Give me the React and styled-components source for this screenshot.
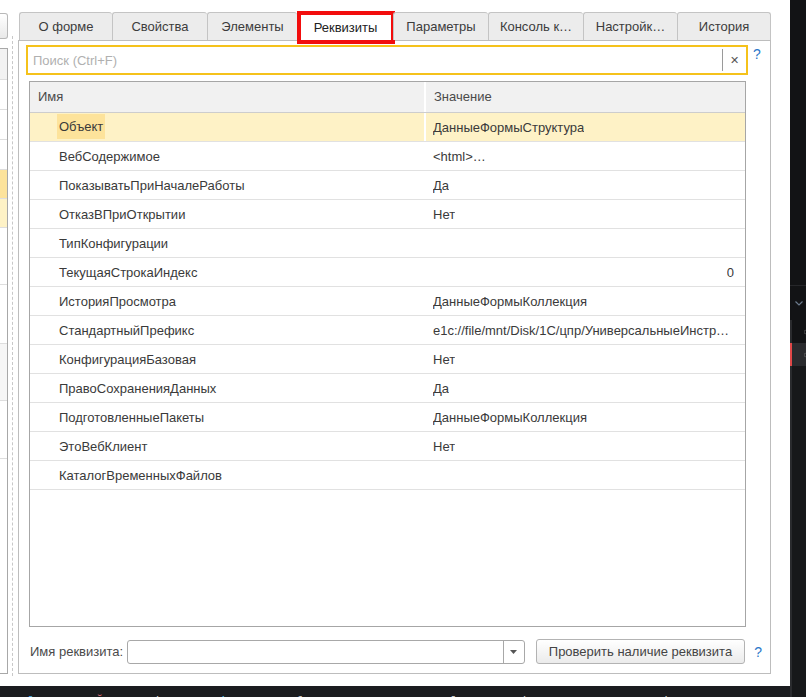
import React from 'react';
import styled, { createGlobalStyle } from 'styled-components';

const GlobalStyle = createGlobalStyle`
  html, body {
    margin: 0;
    padding: 0;
    background: #151618;
  }
  body {
    font-family: "Liberation Sans", Arial, sans-serif;
    font-size: 13px;
    color: #333;
  }
`;

const TEXT = '#3a3a3a';
const BLUE = '#2b78c9';

const Screen = styled.div`
  display: flex;
  width: 806px;
  height: 697px;
  overflow: hidden;
`;

const Workspace = styled.div`
  display: flex;
  flex-direction: column;
  width: 790px;
`;

const Window = styled.div`
  flex: 1;
  display: flex;
  background: #fff;
`;

// code editor below the window, only the tops of its first line are visible
const EditorStrip = styled.div`
  height: 11px;
  background: #1b1c1f;
  overflow: hidden;
  white-space: nowrap;
  font-family: "DejaVu Sans Mono", monospace;
  font-size: 13px;
  line-height: 13px;
  padding: 9px 0 0 28px;
  box-sizing: border-box;
`;

const Code = styled.span`
  color: ${(p) => p.$color};
  margin-right: ${(p) => p.$gap}px;
`;

const SideStrip = styled.div`
  width: 16px;
  display: flex;
  flex-direction: column;
  background: #121315;
`;

const SideTop = styled.div`
  height: 285px;
  border-bottom: 1px solid #26272a;
`;

const SideChevron = styled.div`
  height: 34px;
  display: flex;
  align-items: center;
  padding-left: 5px;
`;

const SideRow = styled.div`
  height: 23px;
  display: flex;
  align-items: center;
  padding-left: 12px;
  background: ${(p) => (p.$active ? '#2a2b2e' : 'transparent')};
  border-left: 2px solid ${(p) => (p.$active ? '#e04848' : '#2a2b2e')};
`;

const SideRest = styled.div`
  flex: 1;
  border-left: 2px solid #2a2b2e;
  background: #17181a;
`;

/* left stub of the neighbouring form */
const LeftPane = styled.div`
  width: 8px;
  display: flex;
  flex-direction: column;
  padding: 13px 0 12px;
  box-sizing: border-box;
`;

const StubButton = styled.div`
  height: 24px;
  border: 1px solid #b8b8b8;
  border-left: none;
  border-radius: 0 3px 3px 0;
  background: linear-gradient(#fff, #e9e9e9);
`;

const StubList = styled.div`
  flex: 1;
  margin-top: 9px;
  border: 1px solid #a8a8a8;
  border-left: none;
  overflow: hidden;
`;

const StubRow = styled.div`
  height: ${(p) => p.$h}px;
  background: ${(p) => p.$bg};
  border-bottom: 1px solid #dedede;
`;

const Splitter = styled.div`
  width: 10px;
  display: flex;
  padding: 36px 0 10px 4px;
  box-sizing: border-box;
`;

const DashedLine = styled.div`
  border-left: 1px dashed #c8c8c8;
`;

const Form = styled.div`
  width: 753px;
  display: flex;
  flex-direction: column;
  padding: 12px 0 12px;
  box-sizing: border-box;
`;

const Tabs = styled.div`
  display: flex;
  height: 28px;
  margin-left: 1px;
  position: relative;
  z-index: 2;
`;

const Tab = styled.div`
  width: ${(p) => p.$w}px;
  flex: none;
  position: relative;
  display: flex;
  align-items: center;
  justify-content: center;
  border: 1px solid #c4c4c4;
  border-bottom: none;
  border-right: ${(p) => (p.$last ? '1px solid #c4c4c4' : 'none')};
  border-radius: 3px 3px 0 0;
  background: ${(p) => (p.$active ? '#fff' : '#ececec')};
  height: ${(p) => (p.$active ? '29px' : '28px')};
  box-sizing: border-box;
  color: ${(p) => (p.$active ? '#222' : '#3c3c3c')};
  font-size: 13px;
  white-space: nowrap;

  ${(p) =>
    p.$marked &&
    `
    &::after {
      content: '';
      position: absolute;
      left: -1px;
      right: -2px;
      top: -2px;
      bottom: -3px;
      border: 4px solid #f20d0d;
      pointer-events: none;
    }
  `}
`;

const Body = styled.div`
  flex: 1;
  display: flex;
  flex-direction: column;
  border: 1px solid #bdbdbd;
  padding: 4px 8px 9px 7px;
  position: relative;
  z-index: 1;
`;

const SearchRow = styled.div`
  display: flex;
  align-items: flex-start;
`;

const SearchBox = styled.div`
  width: 722px;
  height: 30px;
  box-sizing: border-box;
  border: 2px solid #f5c21b;
  display: flex;
  align-items: center;
`;

const SearchText = styled.div`
  flex: 1;
  padding-left: 5px;
  color: #b0b0b0;
  font-size: 13px;
`;

const ClearButton = styled.div`
  width: 22px;
  height: 22px;
  border-left: 1px solid #9a9a9a;
  display: flex;
  align-items: center;
  justify-content: center;
  color: #555;
  font-size: 11px;
  margin-right: 1px;
`;

const Help = styled.div`
  color: ${BLUE};
  font-size: 14px;
  margin-left: ${(p) => p.$gap}px;
  margin-top: ${(p) => p.$top}px;
`;

const Table = styled.div`
  margin: 6px 0 0 3px;
  width: 717px;
  height: 546px;
  box-sizing: border-box;
  border: 1px solid #a6a6a6;
  overflow: hidden;
`;

const HeadRow = styled.div`
  display: grid;
  grid-template-columns: 394px 2px 1fr;
  height: 30px;
  background: #f1f1f1;
  border-bottom: 1px solid #cdcdcd;
  color: #4a4a4a;
`;

const HeadCell = styled.div`
  display: flex;
  align-items: center;
  padding: 0 0 1px 8px;
`;

const ColLine = styled.div`
  background: #fff;
`;

const Row = styled.div`
  display: grid;
  grid-template-columns: 394px 2px 1fr;
  height: 28px;
  border-bottom: 1px solid #e1e1e1;
  background: ${(p) => (p.$selected ? '#fef2c6' : '#fff')};
  color: ${TEXT};
`;

const NameCell = styled.div`
  display: flex;
  align-items: stretch;
  padding: 1px 0 2px 27px;
`;

const NameText = styled.span`
  display: flex;
  align-items: center;
  padding: ${(p) => (p.$selected ? '0 2px' : '1px 2px 0')};
  background: ${(p) => (p.$selected ? '#fde39b' : 'transparent')};
`;

const ValueCell = styled.div`
  display: flex;
  align-items: center;
  justify-content: ${(p) => (p.$right ? 'flex-end' : 'flex-start')};
  padding: ${(p) => (p.$selected ? '0' : '1px')} 11px 0 7px;
  min-width: 0;
`;

const ValueText = styled.span`
  white-space: nowrap;
  overflow: hidden;
  text-overflow: ellipsis;
`;

const Footer = styled.div`
  display: flex;
  align-items: center;
  margin-top: 12px;
  height: 25px;
`;

const Label = styled.div`
  color: #4a4a4a;
  margin-left: 4px;
  width: 97px;
`;

const Combo = styled.div`
  width: 399px;
  height: 24px;
  box-sizing: border-box;
  border: 1px solid #a8a8a8;
  border-radius: 3px;
  display: flex;
  justify-content: flex-end;
`;

const ComboArrow = styled.div`
  width: 20px;
  border-left: 1px solid #a8a8a8;
  display: flex;
  align-items: center;
  justify-content: center;
`;

const Button = styled.div`
  width: 210px;
  height: 25px;
  margin-left: 11px;
  box-sizing: border-box;
  border: 1px solid #b3b3b3;
  border-radius: 3px;
  background: linear-gradient(#ffffff, #ebebeb);
  display: flex;
  align-items: center;
  justify-content: center;
  color: #444;
  font-size: 13px;
`;

const tabs = [
  ['О форме', 93],
  ['Свойства', 95],
  ['Элементы', 90],
  ['Реквизиты', 96],
  ['Параметры', 95],
  ['Консоль к…', 95],
  ['Настройк…', 94],
  ['История', 94],
];

const rows = [
  ['Объект', 'ДанныеФормыСтруктура'],
  ['ВебСодержимое', '<html>…'],
  ['ПоказыватьПриНачалеРаботы', 'Да'],
  ['ОтказВПриОткрытии', 'Нет'],
  ['ТипКонфигурации', ''],
  ['ТекущаяСтрокаИндекс', '0', true],
  ['ИсторияПросмотра', 'ДанныеФормыКоллекция'],
  ['СтандартныйПрефикс', 'e1c://file/mnt/Disk/1C/цпр/УниверсальныеИнструменты/Data'],
  ['КонфигурацияБазовая', 'Нет'],
  ['ПравоСохраненияДанных', 'Да'],
  ['ПодготовленныеПакеты', 'ДанныеФормыКоллекция'],
  ['ЭтоВебКлиент', 'Нет'],
  ['КаталогВременныхФайлов', ''],
];

const stubRows = [
  [30, '#f2f2f2'],
  [29, '#fff'],
  [29, '#fff'],
  [29, '#fff'],
  [28, '#fde39b'],
  [28, '#fef2c6'],
  [56, '#fff'],
  [58, '#fff'],
  [56, '#f6f6f6'],
  [57, '#fff'],
];

const codeBits = [
  ['#4aa3df', 'l', 60],
  ['#e06c75', 'ЙЦ', 40],
  ['#c8c8c8', 'd', 50],
  ['#4fc1e9', 'Лd', 70],
  ['#c8c8c8', 'f', 40],
  ['#4fc1e9', 'Д', 100],
  ['#c8c8c8', 'l', 60],
  ['#c8c8c8', 'd', 70],
  ['#e06c75', 'Б', 60],
  ['#c8c8c8', 'k', 20],
];

export default function App() {
  return (
    <Screen>
      <GlobalStyle />
      <Workspace>
        <Window>
          <LeftPane>
            <StubButton />
            <StubList>
              {stubRows.map(([h, bg], i) => (
                <StubRow key={i} $h={h} $bg={bg} />
              ))}
            </StubList>
          </LeftPane>
          <Splitter>
            <DashedLine />
          </Splitter>
          <Form>
            <Tabs>
              {tabs.map(([t, w], i) => (
                <Tab
                  key={t}
                  $w={w}
                  $last={i === tabs.length - 1}
                  $active={t === 'Реквизиты'}
                  $marked={t === 'Реквизиты'}
                >
                  {t}
                </Tab>
              ))}
            </Tabs>
            <Body>
              <SearchRow>
                <SearchBox>
                  <SearchText>Поиск (Ctrl+F)</SearchText>
                  <ClearButton>✕</ClearButton>
                </SearchBox>
                <Help $gap={5} $top={1}>?</Help>
              </SearchRow>
              <Table>
                <HeadRow>
                  <HeadCell>Имя</HeadCell>
                  <ColLine />
                  <HeadCell>Значение</HeadCell>
                </HeadRow>
                {rows.map(([name, value, right], i) => (
                  <Row key={name} $selected={i === 0}>
                    <NameCell>
                      <NameText $selected={i === 0}>{name}</NameText>
                    </NameCell>
                    <ColLine />
                    <ValueCell $right={right} $selected={i === 0}>
                      <ValueText>{value}</ValueText>
                    </ValueCell>
                  </Row>
                ))}
              </Table>
              <Footer>
                <Label>Имя реквизита:</Label>
                <Combo>
                  <ComboArrow>
                    <svg width="7" height="4" viewBox="0 0 7 4">
                      <path d="M0 0h7L3.5 4z" fill="#555" />
                    </svg>
                  </ComboArrow>
                </Combo>
                <Button>Проверить наличие реквизита</Button>
                <Help $gap={9} $top={0}>?</Help>
              </Footer>
            </Body>
          </Form>
        </Window>
        <EditorStrip>
          {codeBits.map(([c, t, g], i) => (
            <Code key={i} $color={c} $gap={g}>
              {t}
            </Code>
          ))}
        </EditorStrip>
      </Workspace>
      <SideStrip>
        <SideTop />
        <SideChevron>
          <svg width="8" height="5" viewBox="0 0 8 5">
            <path d="M0.5 0.5L4 4l3.5-3.5" stroke="#6b7a8c" strokeWidth="1.2" fill="none" />
          </svg>
        </SideChevron>
        <SideRow>
          <svg width="6" height="12" viewBox="0 0 6 12">
            <rect x="1" y="1" width="10" height="10" rx="1.5" stroke="#9a9a9a" fill="none" />
          </svg>
        </SideRow>
        <SideRow $active>
          <svg width="6" height="12" viewBox="0 0 6 12">
            <rect x="1" y="1" width="10" height="10" rx="1.5" stroke="#9a9a9a" fill="none" />
          </svg>
        </SideRow>
        <SideRest />
      </SideStrip>
    </Screen>
  );
}
